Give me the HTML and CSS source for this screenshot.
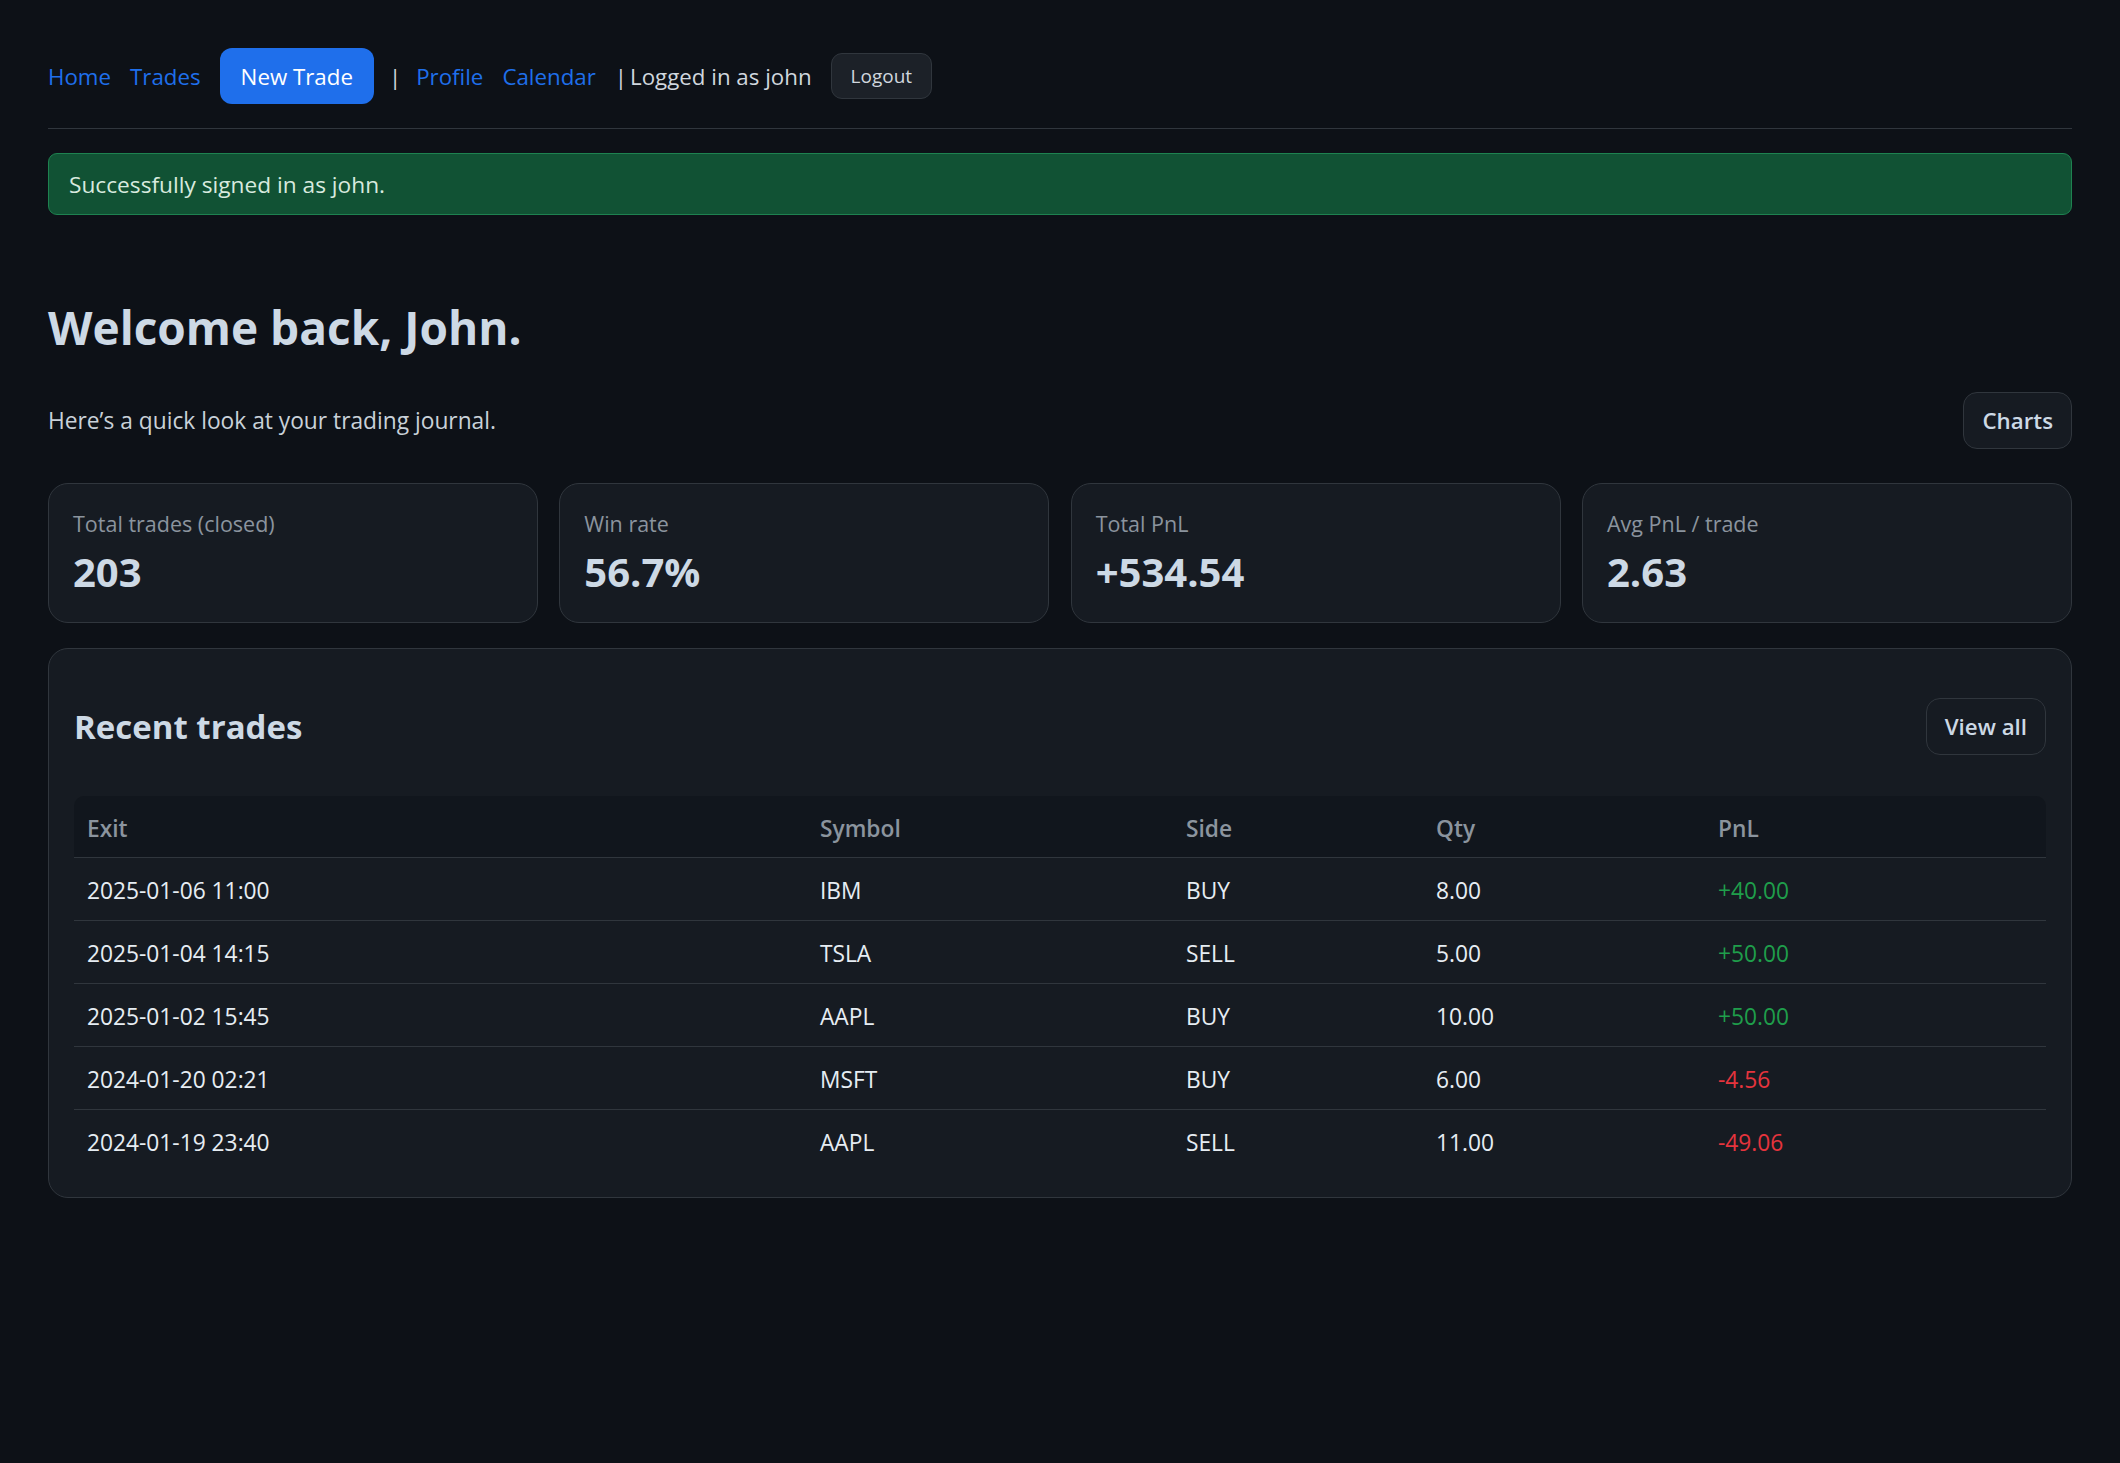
FILE: index.html
```html
<!DOCTYPE html>
<html lang="en">
<head>
<meta charset="utf-8">
<title>Trading Journal</title>
<link rel="stylesheet" href="styles.css">
</head>
<body>
<div class="page">
  <nav class="nav">
    <a class="nav-link" href="#">Home</a>
    <a class="nav-link" href="#">Trades</a>
    <a class="btn btn-primary" href="#">New Trade</a>
    <span class="sep">|</span>
    <a class="nav-link" href="#">Profile</a>
    <a class="nav-link" href="#">Calendar</a>
    <span class="user"><span class="pipe">|</span>Logged in as john</span>
    <button class="btn btn-logout">Logout</button>
  </nav>
  <hr class="divider">
  <div class="alert">Successfully signed in as john.</div>

  <h1 class="title">Welcome back, John.</h1>
  <div class="subrow">
    <p class="subtitle">Here’s a quick look at your trading journal.</p>
    <a class="btn btn-ghost" href="#">Charts</a>
  </div>

  <div class="stats">
    <div class="card">
      <div class="card-label">Total trades (closed)</div>
      <div class="card-value">203</div>
    </div>
    <div class="card">
      <div class="card-label">Win rate</div>
      <div class="card-value">56.7%</div>
    </div>
    <div class="card">
      <div class="card-label">Total PnL</div>
      <div class="card-value">+534.54</div>
    </div>
    <div class="card">
      <div class="card-label">Avg PnL / trade</div>
      <div class="card-value">2.63</div>
    </div>
  </div>

  <section class="panel">
    <div class="panel-head">
      <h2 class="panel-title">Recent trades</h2>
      <a class="btn btn-ghost" href="#">View all</a>
    </div>
    <table class="trades">
      <thead>
        <tr><th>Exit</th><th>Symbol</th><th>Side</th><th>Qty</th><th>PnL</th></tr>
      </thead>
      <tbody>
        <tr><td>2025-01-06 11:00</td><td>IBM</td><td>BUY</td><td>8.00</td><td class="pos">+40.00</td></tr>
        <tr><td>2025-01-04 14:15</td><td>TSLA</td><td>SELL</td><td>5.00</td><td class="pos">+50.00</td></tr>
        <tr><td>2025-01-02 15:45</td><td>AAPL</td><td>BUY</td><td>10.00</td><td class="pos">+50.00</td></tr>
        <tr><td>2024-01-20 02:21</td><td>MSFT</td><td>BUY</td><td>6.00</td><td class="neg">-4.56</td></tr>
        <tr><td>2024-01-19 23:40</td><td>AAPL</td><td>SELL</td><td>11.00</td><td class="neg">-49.06</td></tr>
      </tbody>
    </table>
  </section>
</div>
</body>
</html>
```

FILE: styles.css
```css
* { box-sizing: border-box; }
html, body { margin: 0; background: #0d1117; }
body {
  font-family: "Open Sans", "Noto Sans", sans-serif;
  color: #c9d1d9;
  min-height: 1463px;
}
.page { padding: 48px 48px 0; }

.nav { display: flex; align-items: center; gap: 19px; height: 56px; font-size: 22.3px; }
.nav-link { color: #1f6feb; text-decoration: none; }
.sep, .user { color: #d0d7de; }
.sep { margin: 0 -4px; }
.pipe { margin-right: 3px; }

.btn {
  display: inline-flex; align-items: center; justify-content: center;
  text-decoration: none; border: 1px solid transparent; font-family: inherit; cursor: pointer;
}
.btn-primary { background: #1f6feb; color: #fff; height: 56px; padding: 0 20px; border-radius: 12px; font-size: 22.3px; }
.btn-logout { background: #1c2128; border-color: #30363d; color: #d0d7de; height: 46px; padding: 0 19px; border-radius: 11px; font-size: 19px; }
.btn-ghost { background: #161b22; border-color: #30363d; color: #cdd9e5; height: 57px; padding: 0 18px; border-radius: 14px; font-size: 22.3px; font-weight: 600; }

.divider { border: 0; border-top: 1px solid #30363d; margin: 24px 0; height: 0; }

.alert {
  display: flex; align-items: center; height: 62px; padding: 0 20px;
  background: #115234; border: 1px solid #1e8250; border-radius: 9px;
  color: #d8eadf; font-size: 22.7px;
}

.title { margin: 85px 0 0; font-size: 46px; line-height: 1.2; font-weight: 700; color: #cdd9e5; }

.subrow { display: flex; justify-content: space-between; align-items: center; margin-top: 37px; }
.subtitle { margin: 0; font-size: 22.75px; color: #c9d1d9; }

.stats { display: grid; grid-template-columns: repeat(4, 1fr); gap: 21.33px; margin-top: 34px; }
.card { background: #161b22; border: 1px solid #30363d; border-radius: 20px; padding: 24px 24px 26px; }
.card-label { font-size: 21.5px; line-height: 1.5; color: #8b949e; }
.card-value { margin-top: 8px; font-size: 40px; line-height: 1.2; font-weight: 700; color: #cdd9e5; }

.panel { margin-top: 25px; background: #161b22; border: 1px solid #30363d; border-radius: 20px; padding: 49px 25px 24px; }
.panel-head { display: flex; justify-content: space-between; align-items: center; margin-bottom: 41px; }
.panel-title { margin: 0; font-size: 33px; font-weight: 700; color: #cdd9e5; }

.trades { width: 100%; border-collapse: separate; border-spacing: 0; font-size: 22.75px; }
.trades th {
  background: #11161d; color: #8b949e; font-weight: 600; text-align: left;
  height: 62px; padding: 3px 13px 0; border-bottom: 1px solid #30363d;
}
.trades th:first-child { border-top-left-radius: 10px; }
.trades th:last-child { border-top-right-radius: 10px; }
.trades th:nth-child(1) { width: 37.17%; }
.trades th:nth-child(2) { width: 18.56%; }
.trades th:nth-child(3) { width: 12.68%; }
.trades th:nth-child(4) { width: 14.3%; }
.trades td { height: 63px; padding: 3px 13px 0; border-bottom: 1px solid #30363d; color: #e6edf3; }
.trades tbody tr:last-child td { border-bottom-color: transparent; }
.trades td.pos { color: #1f9e4b; }
.trades td.neg { color: #e5343d; }
```
